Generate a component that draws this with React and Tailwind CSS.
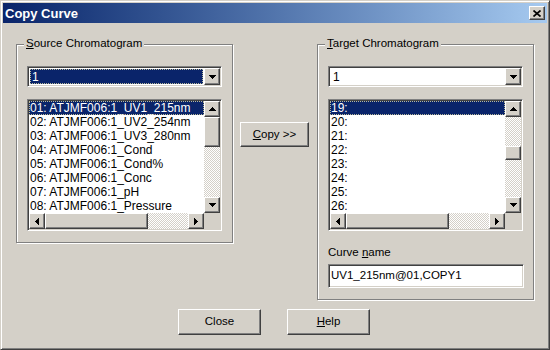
import React from 'react';

const sources = [
    '01: ATJMF006:1_UV1_215nm',
    '02: ATJMF006:1_UV2_254nm',
    '03: ATJMF006:1_UV3_280nm',
    '04: ATJMF006:1_Cond',
    '05: ATJMF006:1_Cond%',
    '06: ATJMF006:1_Conc',
    '07: ATJMF006:1_pH',
    '08: ATJMF006:1_Pressure',
];

const targets = ['19:', '20:', '21:', '22:', '23:', '24:', '25:', '26:'];

const raised = 'border border-t-white border-l-white border-r-[#404040] border-b-[#404040] shadow-[inset_-1px_-1px_0_#808080] bg-[#d4d0c8]';
const sunken = 'border border-t-[#808080] border-l-[#808080] border-r-white border-b-white shadow-[inset_1px_1px_0_#404040,inset_-1px_-1px_0_#d4d0c8] p-px';
const dither = '[background-image:repeating-conic-gradient(#d4d0c8_0%_25%,#ffffff_0%_50%)] [background-size:2px_2px]';

const arrows = {
    up: 'M3 0h1v1h1v1h1v1h1v1h-7v-1h1v-1h1v-1h1z',
    down: 'M0 0h7v1h-1v1h-1v1h-1v1h-1v-1h-1v-1h-1v-1h-1z',
    left: 'M3 0h1v7h-1v-1h-1v-1h-1v-1h-1v-1h1v-1h1v-1h1z',
    right: 'M0 0h1v1h1v1h1v1h1v1h-1v1h-1v1h-1v1h-1z',
};

const Arrow = ({ dir }) => {
    const horiz = dir === 'left' || dir === 'right';
    const w = horiz ? 4 : 7;
    const h = horiz ? 7 : 4;
    return (
        <svg width={w} height={h} viewBox={`0 0 ${w} ${h}`} shapeRendering="crispEdges">
            <path d={arrows[dir]} fill="#000" />
        </svg>
    );
};

const ScrollBtn = ({ dir, tall }) => (
    <div className={`${raised} w-4 ${tall ? 'h-[17px]' : 'h-4'} shrink-0 flex items-center justify-center`}>
        <Arrow dir={dir} />
    </div>
);

const VScroll = ({ thumbTop, thumbH }) => (
    <div className="w-4 h-full flex flex-col">
        <ScrollBtn dir="up" />
        <div className={`flex-1 ${dither}`}>
            <div className={`${raised} w-4`} style={{ marginTop: thumbTop, height: thumbH }} />
        </div>
        <ScrollBtn dir="down" />
    </div>
);

const HScroll = () => (
    <div className="flex-1 h-4 flex">
        <ScrollBtn dir="left" />
        <div className={`flex-1 ${dither}`}>
            <div className={`${raised} h-4 w-[103px]`} />
        </div>
        <ScrollBtn dir="right" />
    </div>
);

const ListBox = ({ items, thumbTop, thumbH }) => (
    <div className={`${sunken} w-[195px] h-[132px] bg-white flex flex-col`}>
        <div className="flex h-[112px]">
            <div className="flex-1 overflow-hidden">
                {items.map((item, i) => (
                    <div
                        key={item}
                        className={`h-[14px] leading-[14px] pl-px text-[12px] whitespace-nowrap ${
                            i === 0 ? 'bg-[#0a246a] text-white outline outline-dotted outline-[#b8b89a] -outline-offset-1' : 'text-black'
                        }`}
                    >
                        {item}
                    </div>
                ))}
            </div>
            <VScroll thumbTop={thumbTop} thumbH={thumbH} />
        </div>
        <div className="flex h-4">
            <HScroll />
            <div className="w-4 h-4 bg-[#d4d0c8]" />
        </div>
    </div>
);

const Combo = ({ selected }) => (
    <div className={`${sunken} w-[195px] h-[21px] bg-white flex`}>
        <div className="flex-1 p-px">
            {selected ? (
                <div className="h-full bg-[#0a246a] text-white text-[12px] leading-[15px] pl-px border border-dotted border-[#b8b89a]">1</div>
            ) : (
                <div className="h-full text-black text-[12px] leading-[17px] pl-[2px]">1</div>
            )}
        </div>
        <ScrollBtn dir="down" tall />
    </div>
);

const Group = ({ label, className, children }) => (
    <div className={`relative border border-[#808080] shadow-[inset_1px_1px_0_#fff,1px_1px_0_#fff] pl-[10px] pt-[21px] ${className}`}>
        <span className="absolute -top-[9px] left-[7px] px-[2px] bg-[#d4d0c8] text-[11.5px] leading-[14px] text-black">{label}</span>
        {children}
    </div>
);

const Button = ({ className, children }) => (
    <div className={`${raised} flex items-center justify-center text-[11.5px] text-black ${className}`}>{children}</div>
);

export default function App() {
    return (
        <div className="w-[550px] h-[350px] bg-[#d4d0c8] border border-t-[#d4d0c8] border-l-[#d4d0c8] border-r-[#404040] border-b-[#404040] shadow-[inset_1px_1px_0_#fff,inset_-1px_-1px_0_#808080] p-[2px] flex flex-col font-['Liberation_Sans',Arial,sans-serif]">
            {/* barra de titulo */}
            <div className="h-[20px] shrink-0 bg-linear-to-r from-[#0a246a] to-[#a6caf0] flex items-center justify-between pl-[2px] pr-[2px]">
                <span className="text-white font-bold text-[13px] leading-[15px]">Copy Curve</span>
                <div className={`${raised} w-4 h-[14px] flex items-center justify-center`}>
                    <svg width="8" height="7" viewBox="0 0 8 7">
                        <path d="M0.5 0.5L7.5 6.5M7.5 0.5L0.5 6.5" stroke="#000" strokeWidth="1.7" />
                    </svg>
                </div>
            </div>

            {/* grupos */}
            <div className="flex pl-[13px] mt-[21px]">
                <Group label={<><u>S</u>ource Chromatogram</>} className="w-[217px] h-[199px]">
                    <Combo selected />
                    <div className="mt-[12px]">
                        <ListBox items={sources} thumbTop={0} thumbH={30} />
                    </div>
                </Group>

                <div className="w-[84px] pl-[7px] pt-[78px]">
                    <Button className="w-[69px] h-[25px]">
                        <span><u>C</u>opy &gt;&gt;</span>
                    </Button>
                </div>

                <Group label={<><u>T</u>arget Chromatogram</>} className="w-[217px] h-[256px]">
                    <Combo />
                    <div className="mt-[12px]">
                        <ListBox items={targets} thumbTop={29} thumbH={14} />
                    </div>
                    <div className="mt-[14px] text-[11.5px] leading-[14px] text-black">
                        Curve <u>n</u>ame
                    </div>
                    <div className={`${sunken} mt-[5px] w-[196px] h-[24px] bg-white text-[11.5px] leading-[18px] pl-[2px] text-black`}>
                        UV1_215nm@01,COPY1
                    </div>
                </Group>
            </div>

            {/* botones */}
            <div className="flex pl-[175px] gap-[26px] mt-[9px]">
                <Button className="w-[83px] h-[26px]">Close</Button>
                <Button className="w-[83px] h-[26px]">
                    <span><u>H</u>elp</span>
                </Button>
            </div>
        </div>
    );
}
